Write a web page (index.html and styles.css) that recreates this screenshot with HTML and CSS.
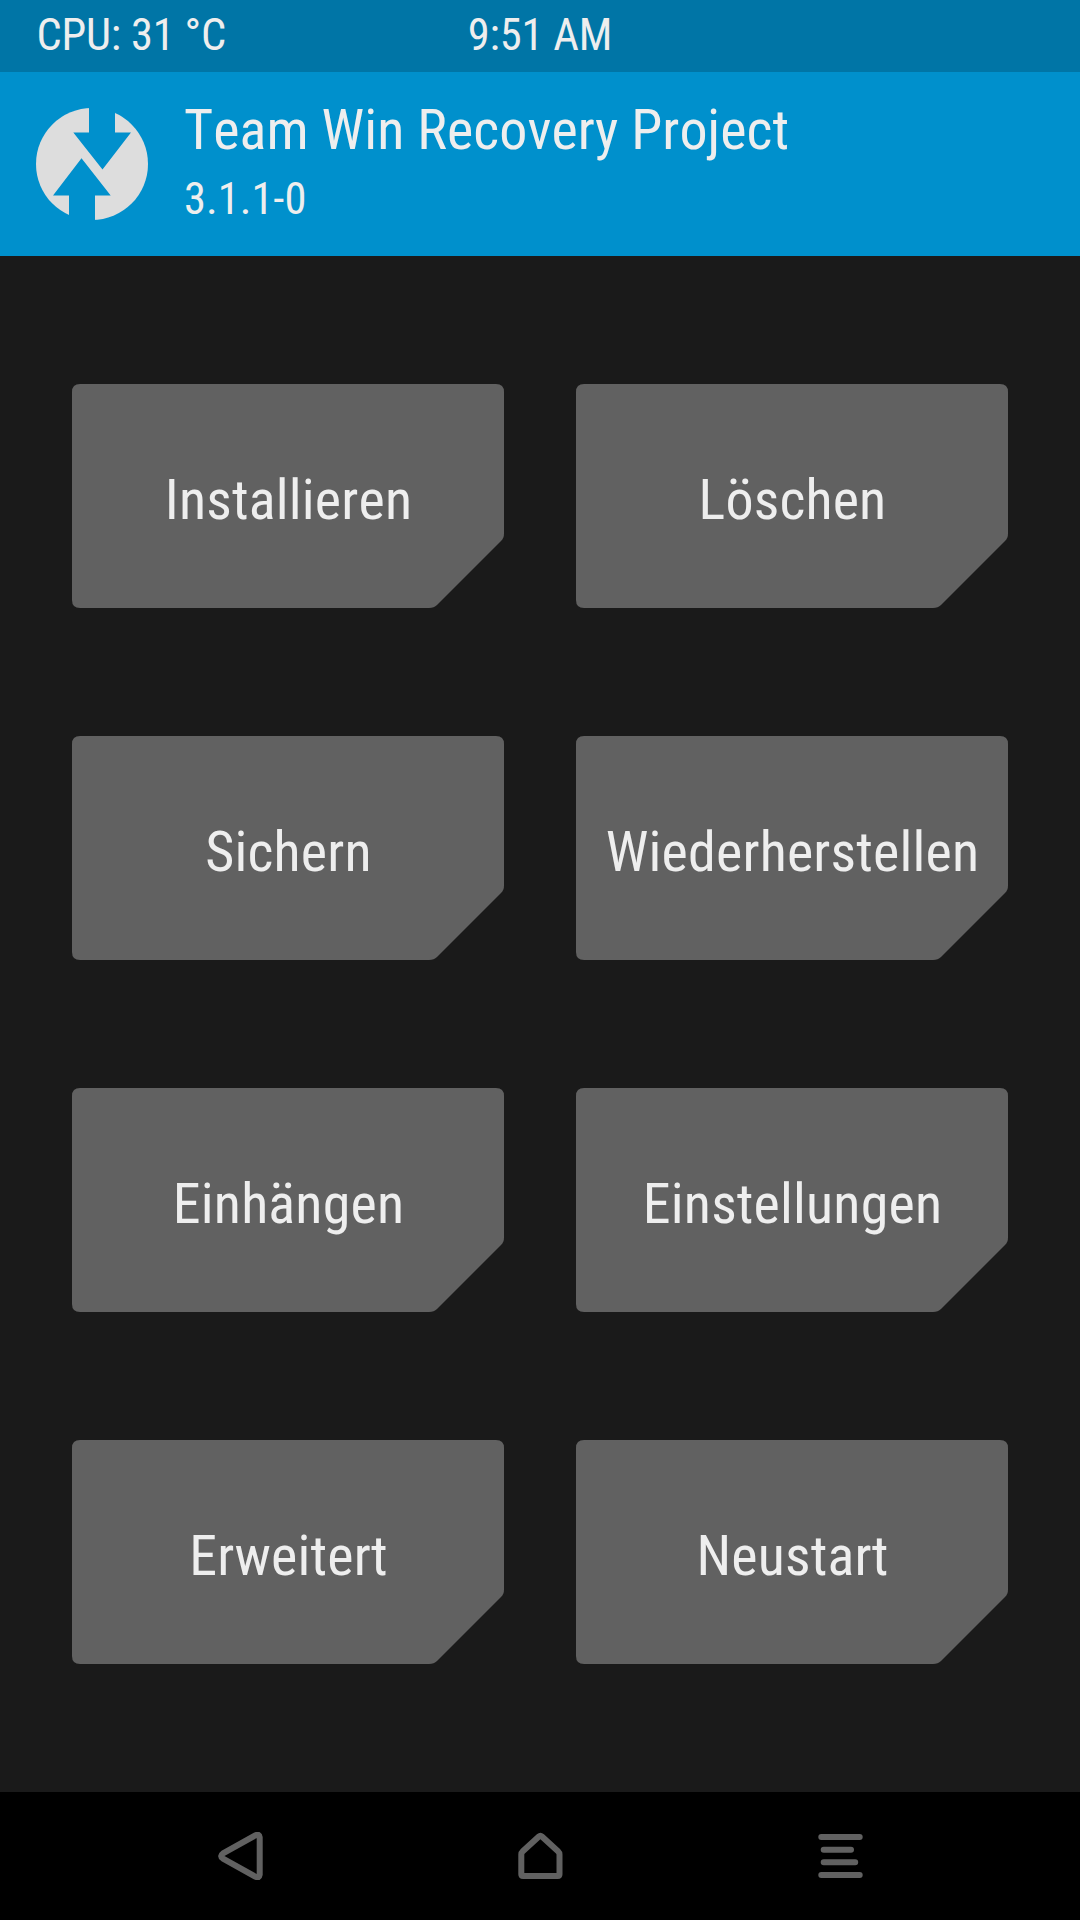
FILE: index.html
```html
<!DOCTYPE html>
<html lang="de">
<head>
    <meta charset="UTF-8">
    <title>Team Win Recovery Project</title>
    <link rel="stylesheet" href="styles.css">
</head>
<body>
    <div class="status-bar">
        <span class="cpu">CPU: 31 °C</span>
        <span class="clock">9:51 AM</span>
    </div>

    <header class="header">
        <svg class="logo" viewBox="0 0 112 112">
            <defs>
                <mask id="arrows">
                    <rect width="112" height="112" fill="#fff"/>
                    <path d="M53 -1H79V24.5H95L66.5 61.5L37.3 24.5H53Z"/>
                    <path d="M59 113H33V87.5H17L45.5 50.3L74.7 87.5H59Z"/>
                </mask>
            </defs>
            <circle cx="56" cy="56" r="56" fill="#dddddd" mask="url(#arrows)"/>
        </svg>
        <div class="titles">
            <h1>Team Win Recovery Project</h1>
            <p>3.1.1-0</p>
        </div>
    </header>

    <main class="menu">
        <button>Installieren</button>
        <button>Löschen</button>
        <button>Sichern</button>
        <button>Wiederherstellen</button>
        <button>Einhängen</button>
        <button>Einstellungen</button>
        <button>Erweitert</button>
        <button>Neustart</button>
    </main>

    <nav class="nav-bar">
        <svg viewBox="0 0 48 48">
            <path d="M43.7 42.7V5.3Q43.2 1.6 39.7 3.2L7 21.4Q3.2 24 7 26.6L39.7 44.8Q43.2 46.4 43.7 42.7Z"/>
        </svg>
        <svg viewBox="0 0 48 48">
            <path d="M22.9 4.5Q24.4 3.1 25.9 4.5L42 19.2Q43.5 20.6 43.5 22.5V42.2Q43.5 44 41.7 44H7.1Q5.3 44 5.3 42.2V22.5Q5.3 20.6 6.8 19.2Z"/>
        </svg>
        <svg viewBox="0 0 48 48">
            <path d="M5.3 5H43.7M7.7 17.7H35M7.7 30.3H39.2M5.3 43H43.7"/>
        </svg>
    </nav>
</body>
</html>
```

FILE: styles.css
```css
body {
    display: flex;
    flex-direction: column;
    width: 1080px;
    height: 1920px;
    margin: 0;
    background: #1a1a1a;
    color: #eeeeee;
    font-family: "Roboto Condensed", Roboto, sans-serif;
    font-stretch: 75%;
    font-kerning: none;
}
.status-bar {
    display: grid;
    grid-template-columns: 1fr auto 1fr;
    height: 72px;
    padding: 0 36.5px;
    box-sizing: border-box;
    background: #0075a6;
    font-size: 44.5px;
    letter-spacing: -0.2px;
    line-height: 70px;
}
.header {
    display: flex;
    align-items: flex-start;
    gap: 36px;
    height: 184px;
    padding: 22px 36px 0;
    box-sizing: border-box;
    background: #0090cc;
}
.logo {
    width: 112px;
    height: 112px;
    margin-top: 14px;
}
.titles h1, .titles p {
    margin: 0;
    font-weight: normal;
}
.titles h1 {
    font-size: 56px;
    letter-spacing: 0.06px;
    line-height: 72px;
}
.titles p {
    font-size: 44.5px;
    line-height: 66px;
}
.menu {
    flex: 1;
    display: grid;
    grid-template-columns: 432px 432px;
    grid-auto-rows: 224px;
    gap: 128px 72px;
    padding: 128px 72px 0;
}
.menu button {
    padding: 8px 0 0 1px;
    border: none;
    background: #616161;
    color: inherit;
    font: inherit;
    font-size: 56px;
    font-kerning: none;
    letter-spacing: 0.18px;
    /* rounded card with the bottom right corner cut off */
    clip-path: path("M8 0H424Q432 0 432 8V149.5Q432 154 429 157L365 221Q362 224 357 224H8Q0 224 0 216V8Q0 0 8 0Z");
}
.nav-bar {
    display: flex;
    justify-content: center;
    align-items: center;
    gap: 252px;
    height: 128px;
    background: #000;
}
.nav-bar svg {
    width: 48px;
    height: 48px;
    fill: none;
    stroke: #616161;
    stroke-width: 6;
    stroke-linecap: round;
    stroke-linejoin: round;
}
```
